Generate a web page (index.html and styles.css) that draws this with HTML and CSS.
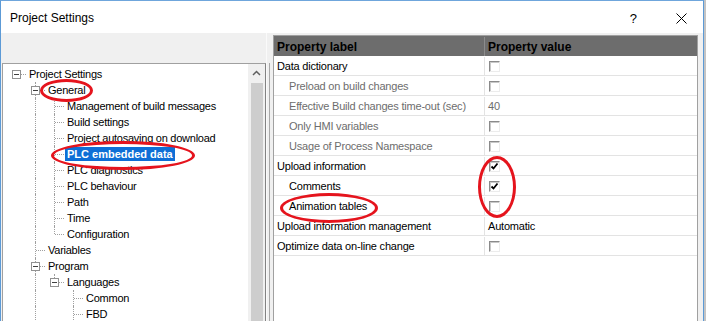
FILE: index.html
```html
<!DOCTYPE html>
<html lang="en">
<head>
    <meta charset="UTF-8">
    <title>Project Settings</title>
    <link rel="stylesheet" href="styles.css">
</head>
<body>
    <div class="window">
        <div class="titlebar">
            <span class="title">Project Settings</span>
            <span class="help">?</span>
            <span class="close">
                <svg width="11" height="11" viewBox="0 0 11 11"><path d="M0.5 0.5 L10.5 10.5 M10.5 0.5 L0.5 10.5" stroke="#000" stroke-width="1" fill="none"/></svg>
            </span>
        </div>

        <div class="content">
            <div class="tree-pane">
                <ul class="tree">
                    <li class="node"><span class="cell h"><i class="box"></i></span><span class="label">Project Settings</span></li>
                    <li class="node"><span class="cell"></span><span class="cell t"><i class="box"></i></span><span class="label">General</span></li>
                    <li class="node"><span class="cell"></span><span class="cell v"></span><span class="cell t"></span><span class="label">Management of build messages</span></li>
                    <li class="node"><span class="cell"></span><span class="cell v"></span><span class="cell t"></span><span class="label">Build settings</span></li>
                    <li class="node"><span class="cell"></span><span class="cell v"></span><span class="cell t"></span><span class="label">Project autosaving on download</span></li>
                    <li class="node"><span class="cell"></span><span class="cell v"></span><span class="cell t"></span><span class="label selected">PLC embedded data</span></li>
                    <li class="node"><span class="cell"></span><span class="cell v"></span><span class="cell t"></span><span class="label">PLC diagnostics</span></li>
                    <li class="node"><span class="cell"></span><span class="cell v"></span><span class="cell t"></span><span class="label">PLC behaviour</span></li>
                    <li class="node"><span class="cell"></span><span class="cell v"></span><span class="cell t"></span><span class="label">Path</span></li>
                    <li class="node"><span class="cell"></span><span class="cell v"></span><span class="cell t"></span><span class="label">Time</span></li>
                    <li class="node"><span class="cell"></span><span class="cell v"></span><span class="cell l"></span><span class="label">Configuration</span></li>
                    <li class="node"><span class="cell"></span><span class="cell t"></span><span class="label">Variables</span></li>
                    <li class="node"><span class="cell"></span><span class="cell t"><i class="box"></i></span><span class="label">Program</span></li>
                    <li class="node"><span class="cell"></span><span class="cell v"></span><span class="cell l"><i class="box"></i></span><span class="label">Languages</span></li>
                    <li class="node"><span class="cell"></span><span class="cell v"></span><span class="cell"></span><span class="cell t"></span><span class="label">Common</span></li>
                    <li class="node"><span class="cell"></span><span class="cell v"></span><span class="cell"></span><span class="cell t"></span><span class="label">FBD</span></li>
                </ul>
                <div class="scrollbar">
                    <div class="scroll-btn">
                        <svg width="9" height="6" viewBox="0 0 9 6"><path d="M1 5 L4.5 1.5 L8 5" stroke="#606060" stroke-width="1.5" fill="none"/></svg>
                    </div>
                    <div class="scroll-thumb"></div>
                </div>
            </div>

            <div class="splitter"></div>

            <div class="prop-grid">
                <div class="prop-head">
                    <div class="col-label">Property label</div>
                    <div class="col-value">Property value</div>
                </div>
                <div class="prop-row">
                    <div class="col-label">Data dictionary</div>
                    <div class="col-value"><span class="check"></span></div>
                </div>
                <div class="prop-row sub off">
                    <div class="col-label">Preload on build changes</div>
                    <div class="col-value"><span class="check"></span></div>
                </div>
                <div class="prop-row sub off">
                    <div class="col-label">Effective Build changes time-out (sec)</div>
                    <div class="col-value">40</div>
                </div>
                <div class="prop-row sub off">
                    <div class="col-label">Only HMI variables</div>
                    <div class="col-value"><span class="check"></span></div>
                </div>
                <div class="prop-row sub off">
                    <div class="col-label">Usage of Process Namespace</div>
                    <div class="col-value"><span class="check"></span></div>
                </div>
                <div class="prop-row">
                    <div class="col-label">Upload information</div>
                    <div class="col-value"><span class="check checked"><svg width="9" height="9" viewBox="0 0 9 9"><path d="M1.5 4.5 L3.5 6.5 L7.5 1.5" stroke="#000" stroke-width="1.8" fill="none"/></svg></span></div>
                </div>
                <div class="prop-row sub">
                    <div class="col-label">Comments</div>
                    <div class="col-value"><span class="check checked"><svg width="9" height="9" viewBox="0 0 9 9"><path d="M1.5 4.5 L3.5 6.5 L7.5 1.5" stroke="#000" stroke-width="1.8" fill="none"/></svg></span></div>
                </div>
                <div class="prop-row sub">
                    <div class="col-label">Animation tables</div>
                    <div class="col-value"><span class="check"></span></div>
                </div>
                <div class="prop-row">
                    <div class="col-label">Upload information management</div>
                    <div class="col-value">Automatic</div>
                </div>
                <div class="prop-row">
                    <div class="col-label">Optimize data on-line change</div>
                    <div class="col-value"><span class="check"></span></div>
                </div>
            </div>
        </div>

        <!-- red annotation marks -->
        <div class="mark mark-general"></div>
        <div class="mark mark-plc"></div>
        <div class="mark mark-anim"></div>
        <div class="mark mark-checks"></div>
    </div>
</body>
</html>
```

FILE: styles.css
```css
* {
    margin: 0;
    padding: 0;
    box-sizing: border-box;
}

body {
    width: 706px;
    height: 321px;
    overflow: hidden;
    background: #c4c4c4;
    font-family: "Liberation Sans", Arial, sans-serif;
    font-size: 11px;
    color: #000;
}

.window {
    position: relative;
    width: 704px;
    height: 321px;
    border-left: 1px solid #5c9ad6;
    border-right: 1px solid #5c9ad6;
    border-top: 1px solid #6fa6dc;
    background: #f0f0f0;
    display: flex;
    flex-direction: column;
}

.titlebar {
    height: 32px;
    background: #fff;
    display: flex;
    align-items: center;
    padding-left: 9px;
    flex: none;
}

.title {
    font-size: 12px;
    flex: 1;
    margin-top: 2px;
}

.help {
    font-size: 13px;
    margin-right: 39px;
    margin-top: 2px;
}

.close {
    display: flex;
    margin-right: 16px;
    margin-top: 2px;
}

.content {
    flex: 1;
    display: flex;
    padding-left: 1px;
    min-height: 0;
}

/* tree */

.tree-pane {
    width: 264px;
    margin-top: 30px;
    background: #fff;
    border-top: 1px solid #a0a0a0;
    border-left: 1px solid #a0a0a0;
    border-right: 1px solid #828282;
    display: flex;
}

.tree {
    list-style: none;
    flex: 1;
    padding: 2px 0 0 4px;
    letter-spacing: -0.25px;
}

.node {
    display: flex;
    align-items: center;
    height: 16px;
}

.cell {
    position: relative;
    flex: none;
    width: 19px;
    height: 16px;
}

.cell.v::before,
.cell.t::before,
.cell.l::before {
    content: "";
    position: absolute;
    left: 9px;
    top: 0;
    bottom: 0;
    border-left: 1px dotted #a0a0a0;
}

.cell.l::before {
    bottom: 8px;
}

.cell.t::after,
.cell.l::after,
.cell.h::after {
    content: "";
    position: absolute;
    left: 10px;
    right: 0;
    top: 8px;
    border-top: 1px dotted #a0a0a0;
}

.box {
    position: absolute;
    left: 5px;
    top: 4px;
    width: 9px;
    height: 9px;
    border: 1px solid #919191;
    background: #fff;
    z-index: 1;
}

.box::before {
    content: "";
    position: absolute;
    left: 1px;
    top: 3px;
    width: 5px;
    height: 1px;
    background: #404040;
}

.label {
    margin-left: 1px;
    padding: 0 2px;
    line-height: 14px;
    white-space: nowrap;
}

.label.selected {
    background: #0e6fd6;
    color: #fff;
    font-weight: bold;
    letter-spacing: 0;
}

.scrollbar {
    width: 17px;
    flex: none;
    background: #f0f0f0;
    display: flex;
    flex-direction: column;
}

.scroll-btn {
    height: 17px;
    display: flex;
    align-items: center;
    justify-content: center;
}

.scroll-thumb {
    flex: 1;
    margin: 2px 2px 0 3px;
    background: #cdcdcd;
}

.splitter {
    width: 7px;
    flex: none;
    border-left: 1px solid #fafafa;
    position: relative;
}

.splitter::before {
    content: "";
    position: absolute;
    left: 2px;
    top: 30px;
    bottom: 0;
    border-left: 1px solid #a8a8a8;
}

/* property grid */

.prop-grid {
    width: 425px;
    margin-top: 2px;
    background: #fff;
    border: 1px solid #a0a0a0;
    border-bottom: none;
    letter-spacing: -0.2px;
}

.prop-head,
.prop-row {
    display: flex;
}

.prop-head {
    height: 20px;
    padding-top: 1px;
    background: #6d6d6d;
    font-weight: bold;
    font-size: 12px;
    letter-spacing: 0;
}

.prop-row {
    height: 20px;
    padding-top: 1px;
    border-bottom: 1px solid #e3e3e3;
}

.col-label {
    width: 211px;
    padding-left: 3px;
    display: flex;
    align-items: center;
    border-right: 1px solid #e3e3e3;
    white-space: nowrap;
}

.prop-head .col-label {
    border-right-color: #8c8c8c;
}

.col-value {
    flex: 1;
    padding-left: 3px;
    display: flex;
    align-items: center;
}

.sub .col-label {
    padding-left: 15px;
}

.off {
    color: #6d6d6d;
}

.check {
    width: 11px;
    height: 11px;
    margin-left: 1px;
    border: 1px solid;
    border-color: #8a8a8a #ececec #ececec #8a8a8a;
    box-shadow: inset 1px 1px 0 #c8c8c8;
    background: #fff;
    display: flex;
    align-items: center;
    justify-content: center;
}

/* annotations */

.mark {
    position: absolute;
    border: 3px solid #e5141d;
    border-radius: 50%;
}

.mark-general {
    left: 39px;
    top: 78px;
    width: 53px;
    height: 23px;
}

.mark-plc {
    left: 50px;
    top: 140px;
    width: 144px;
    height: 29px;
}

.mark-anim {
    left: 279px;
    top: 192px;
    width: 98px;
    height: 30px;
}

.mark-checks {
    left: 477px;
    top: 155px;
    width: 38px;
    height: 62px;
}
```
